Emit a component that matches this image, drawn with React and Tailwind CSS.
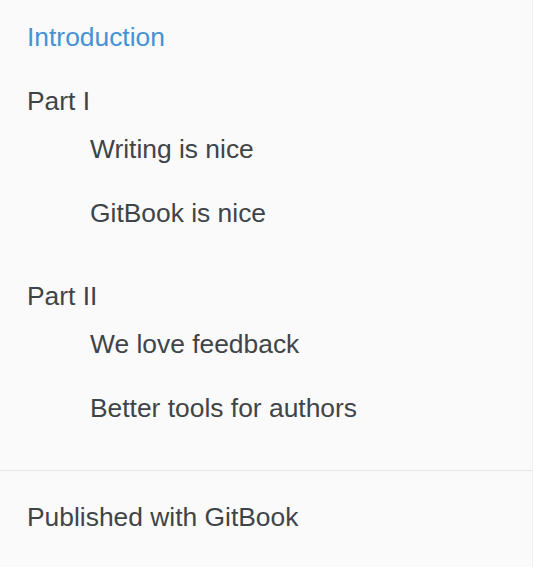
import React from "react";

const parts = [
  { title: "Part I", chapters: ["Writing is nice", "GitBook is nice"] },
  { title: "Part II", chapters: ["We love feedback", "Better tools for authors"] },
];

export default function App() {
  return (
    <div className="min-h-[574px] bg-white">
      <nav
        className="flex w-[533px] flex-col border-r border-[#f0f0f0] bg-[#fafafa] text-[26.4px] leading-[32px] text-[#3f4448]"
        style={{ fontFamily: '"Liberation Sans", Arial, sans-serif' }}
      >
        <ul className="pl-[27px] pt-[21px]">
          <li className="text-[#4592d4]">Introduction</li>
          {parts.map((part, index) => (
            <li key={part.title} className={index === 0 ? "mt-[32px]" : "mt-[51px]"}>
              <div>{part.title}</div>
              <ul className="mt-[16px] flex flex-col gap-[32px] pl-[63px]">
                {part.chapters.map((chapter) => (
                  <li key={chapter}>{chapter}</li>
                ))}
              </ul>
            </li>
          ))}
        </ul>
        <div className="mt-[46px] border-t border-[#e6e6e6] pb-[34px] pl-[27px] pt-[30px]">Published with GitBook</div>
      </nav>
    </div>
  );
}
